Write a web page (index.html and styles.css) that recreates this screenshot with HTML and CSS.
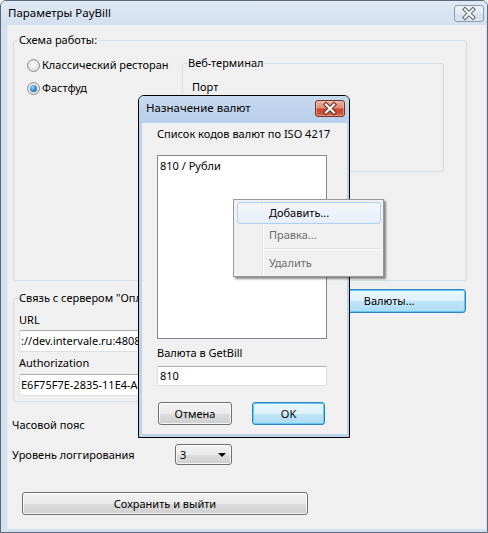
FILE: index.html
```html
<!DOCTYPE html>
<html lang="ru">
<head>
<meta charset="utf-8">
<title>Параметры PayBill</title>
<link rel="stylesheet" href="styles.css">
</head>
<body>
<div class="window main">
  <div class="titlebar">
    <span class="title">Параметры PayBill</span>
    <span class="close close-inactive">
      <svg width="30" height="17" viewBox="0 0 30 17">
        <path d="M11 4.5 L19 12.5 M19 4.5 L11 12.5" stroke="#5f6b78" stroke-width="4.2" stroke-linecap="square" fill="none"/>
        <path d="M11 4.5 L19 12.5 M19 4.5 L11 12.5" stroke="#f7f9fb" stroke-width="2.2" stroke-linecap="square" fill="none"/>
      </svg>
    </span>
  </div>
  <div class="frame">
    <div class="client">
      <fieldset class="group g1">
        <legend>Схема работы:</legend>
        <div class="g1-body">
          <div class="radios">
            <div class="radio"><span class="dot"></span><span>Классический ресторан</span></div>
            <div class="radio checked"><span class="dot"></span><span>Фастфуд</span></div>
          </div>
          <fieldset class="group g-web">
            <legend>Веб-терминал</legend>
            <div class="port">Порт</div>
          </fieldset>
        </div>
      </fieldset>
      <div class="row2">
        <fieldset class="group g2">
          <legend>Связь с сервером "Опла</legend>
          <div class="lbl">URL</div>
          <div class="textbox tb-wide">://dev.intervale.ru:4808</div>
          <div class="lbl lbl-auth">Authorization</div>
          <div class="textbox tb-wide tb-auth">E6F75F7E-2835-11E4-A</div>
        </fieldset>
        <div class="btn btn-blue btn-currency">Валюты...</div>
      </div>
      <div class="field-row tz">
        <span class="field-label">Часовой пояс</span>
      </div>
      <div class="field-row log">
        <span class="field-label">Уровень логгирования</span>
        <div class="combo"><span>3</span><span class="arrow"></span></div>
      </div>
      <div class="btn btn-save">Сохранить и выйти</div>
    </div>
  </div>
</div>

<div class="window dialog">
  <div class="dlg-title">
    <span class="title">Назначение валют</span>
    <span class="close close-red">
      <svg width="30" height="17" viewBox="0 0 30 17">
        <path d="M11 4.5 L19 12.5 M19 4.5 L11 12.5" stroke="#6e2a22" stroke-width="4.2" stroke-linecap="square" fill="none"/>
        <path d="M11 4.5 L19 12.5 M19 4.5 L11 12.5" stroke="#ffffff" stroke-width="2.2" stroke-linecap="square" fill="none"/>
      </svg>
    </span>
  </div>
  <div class="dlg-frame">
    <div class="dlg-client">
      <div class="dlg-caption">Список кодов валют по ISO 4217</div>
      <div class="listbox"><div class="list-item">810 / Рубли</div></div>
      <div class="dlg-caption cap-getbill">Валюта в GetBill</div>
      <div class="textbox tb-dlg">810</div>
      <div class="dlg-buttons">
        <div class="btn btn-cancel">Отмена</div>
        <div class="btn btn-blue btn-ok">OK</div>
      </div>
    </div>
  </div>
</div>

<div class="menu">
  <div class="menu-item hot">Добавить...</div>
  <div class="menu-item disabled">Правка...</div>
  <div class="menu-sep"></div>
  <div class="menu-item disabled">Удалить</div>
</div>
</body>
</html>
```

FILE: styles.css
```css
* { box-sizing: border-box; }
html, body { margin: 0; padding: 0; }
body {
  position: relative;
  width: 488px;
  height: 533px;
  overflow: hidden;
  background: #ffffff;
  font-family: "Noto Sans", "Open Sans", sans-serif;
  font-size: 11px;
  line-height: 16px;
  color: #000;
}

/* ---------- main window ---------- */
.main {
  width: 488px;
  height: 533px;
  border: 1px solid #5d6976;
  border-radius: 6px 6px 0 0;
  background: #d4e1f0;
  display: flex;
  flex-direction: column;
}
.titlebar {
  height: 24px;
  flex: none;
  display: flex;
  align-items: flex-start;
  padding-left: 7px;
  border-radius: 5px 5px 0 0;
  background: linear-gradient(#dfe9f5, #d3e0ef);
}
.title { margin-top: 4px; white-space: nowrap; font-size: 11.5px; }
.close {
  margin-left: auto;
  margin-top: 4px;
  margin-right: 3px;
  width: 30px;
  height: 17px;
  border-radius: 3px;
  display: block;
}
.close svg { display: block; }
.close-inactive {
  border: 1px solid #8e9bab;
  background: linear-gradient(#eef3f9 0%, #e3eaf3 50%, #d5dfeb 51%, #dbe4ef 100%);
}
.close-inactive svg { margin: -1px; }
.frame {
  flex: 1;
  display: flex;
  padding: 0 1px 3px 6px;
}
.client {
  flex: 1;
  background: #f0f0f0;
  border-left: 1px solid #e6ecf3;
  padding: 7px 0 0 3px;
  display: flex;
  flex-direction: column;
  align-items: flex-start;
}

/* group boxes */
.group {
  margin: 0 0 0 2px;
  padding: 0 0 0 4px;
  border: 1px solid #d5dfe5;
  border-radius: 3px;
  min-width: 0;
}
.group legend {
  padding: 0 1px;
  line-height: 16px;
  white-space: nowrap;
}
.g1 { width: 454px; height: 249px; }
.g1-body { display: flex; margin-top: 7px; }
.radios {
  width: 155px;
  margin-left: 9px;
  display: flex;
  flex-direction: column;
  gap: 3px;
}
.radio {
  height: 20px;
  display: flex;
  align-items: center;
  gap: 2px;
  white-space: nowrap;
}
.dot {
  width: 13px;
  height: 13px;
  border-radius: 50%;
  border: 1px solid #8a8d90;
  background: radial-gradient(circle at 50% 45%, #fbfbfb 0%, #e6e6e6 55%, #cfd0d1 100%);
  display: flex;
  align-items: center;
  justify-content: center;
  flex: none;
}
.radio.checked .dot::after {
  content: "";
  width: 7px;
  height: 7px;
  border-radius: 50%;
  background: radial-gradient(circle at 40% 35%, #9fdcff 0%, #3c95d6 45%, #124f8c 100%);
}
.g-web {
  margin: 0;
  width: 262px;
  height: 117px;
}
.port { margin: 8px 0 0 5px; }

.row2 {
  display: flex;
  align-items: flex-start;
  width: 456px;
  margin-top: 8px;
}
.g2 {
  width: 300px;
  height: 112px;
  margin-top: 1px;
  display: flex;
  flex-direction: column;
  align-items: flex-start;
}
.lbl { margin: 6px 0 0 1px; }
.lbl-auth { margin-top: 3px; }
.textbox {
  background: #fff;
  border: 1px solid #dbdfe6;
  border-top-color: #abadb3;
  border-radius: 2px;
  white-space: nowrap;
  overflow: hidden;
  line-height: 18px;
  padding-left: 1px;
}
.tb-wide {
  width: 121px;
  height: 22px;
  margin: 2px 0 0 1px;
  line-height: 20px;
}
.tb-auth { margin-top: 3px; }

/* buttons */
.btn {
  border: 1px solid #707070;
  border-radius: 3px;
  background: linear-gradient(#f2f2f2 0%, #ebebeb 50%, #dddddd 51%, #cfcfcf 100%);
  box-shadow: inset 0 0 0 1px rgba(255,255,255,0.75);
  display: flex;
  align-items: center;
  justify-content: center;
  white-space: nowrap;
}
.btn-blue {
  border-color: #2d86bd;
  background: linear-gradient(#eaf6fd 0%, #dcf1fc 50%, #c1e5f8 51%, #aedbf4 100%);
  box-shadow: inset 0 0 0 1px #62c8f3;
}
.btn-currency {
  margin-left: auto;
  width: 154px;
  height: 24px;
  margin-right: 1px;
}
.field-row {
  display: flex;
  align-items: center;
  margin-left: 1px;
}
.field-label { width: 163px; }
.tz { height: 20px; margin-top: 13px; }
.tz .field-label { width: auto; }
.log { height: 21px; margin-top: 9px; }
.combo {
  width: 57px;
  height: 21px;
  border: 1px solid #707070;
  border-radius: 3px;
  background: linear-gradient(#f2f2f2 0%, #ebebeb 50%, #dddddd 51%, #cfcfcf 100%);
  box-shadow: inset 0 0 0 1px rgba(255,255,255,0.75);
  display: flex;
  align-items: center;
  padding: 0 5px 0 4px;
}
.arrow {
  margin-left: auto;
  width: 0;
  height: 0;
  border-left: 4px solid transparent;
  border-right: 4px solid transparent;
  border-top: 4px solid #000;
}
.btn-save {
  width: 286px;
  height: 23px;
  margin: 27px 0 0 11px;
}

/* ---------- dialog ---------- */
.dialog {
  position: absolute;
  left: 138px;
  top: 95px;
  width: 212px;
  height: 343px;
  border: 1px solid #000;
  border-radius: 6px 6px 0 0;
  background: #bdd3eb;
  display: flex;
  flex-direction: column;
}
.dlg-title {
  height: 27px;
  flex: none;
  display: flex;
  align-items: flex-start;
  padding-left: 7px;
  border-radius: 5px 5px 0 0;
  background: linear-gradient(#c6d9ee, #b9d0ea);
}
.dlg-title .close { margin-top: 4px; margin-right: 4px; }
.close-red {
  border: 1px solid #7a3128;
  background: linear-gradient(#eab1a3 0%, #de8d78 45%, #c9452f 55%, #d2614a 100%);
  box-shadow: inset 0 0 0 1px rgba(255,210,200,0.45);
}
.close-red svg { margin: -1px; }
.dlg-frame {
  flex: 1;
  display: flex;
  padding: 0 2px 3px 3px;
}
.dlg-client {
  flex: 1;
  background: #f0f0f0;
  padding: 3px 0 0 15px;
  display: flex;
  flex-direction: column;
  align-items: flex-start;
}
.listbox {
  width: 170px;
  height: 184px;
  margin-top: 13px;
  background: #fff;
  border: 1px solid #828790;
  padding: 2px 0 0 2px;
}
.cap-getbill { margin-top: 6px; }
.tb-dlg {
  width: 170px;
  height: 20px;
  margin-top: 5px;
  padding-left: 2px;
}
.dlg-buttons {
  display: flex;
  margin-top: 16px;
}
.btn-cancel { width: 74px; height: 23px; margin-left: 1px; }
.btn-ok { width: 73px; height: 23px; margin-left: 20px; }

/* ---------- context menu ---------- */
.menu {
  position: absolute;
  left: 233px;
  top: 199px;
  width: 151px;
  height: 78px;
  border: 1px solid #979797;
  background: linear-gradient(to right, #f1f1f1 0 28px, #e2e3e3 28px 29px, #ffffff 29px 30px, #f0f0f0 30px);
  box-shadow: 2px 2px 2px rgba(0,0,0,0.45);
  padding: 2px 2px 2px 3px;
}
.menu-item {
  height: 22px;
  line-height: 20px;
  padding-left: 31px;
  border: 1px solid transparent;
  border-radius: 3px;
  white-space: nowrap;
}
.menu-item.hot {
  border-color: #aecff7;
  background: linear-gradient(#f3f7fc, #e6eef9);
}
.menu-item.disabled { color: #6d6d6d; }
.menu-sep {
  height: 6px;
  margin-left: 27px;
  background: linear-gradient(#f0f0f0 0 2px, #e0e0e0 2px 3px, #ffffff 3px 4px, transparent 4px);
}
```
